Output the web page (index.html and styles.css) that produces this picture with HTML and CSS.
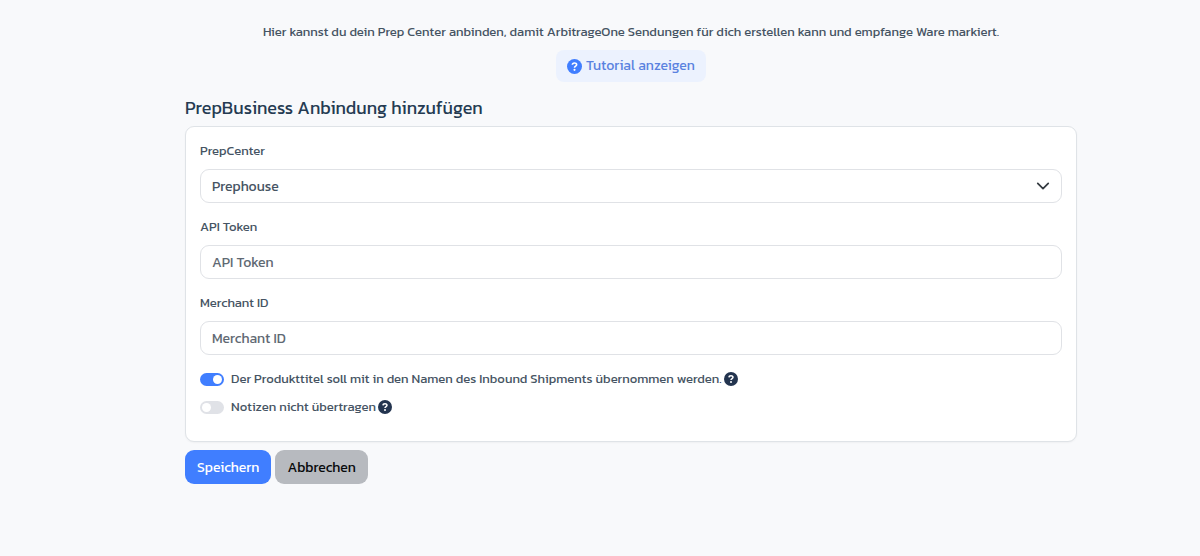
FILE: index.html
```html
<!DOCTYPE html>
<html lang="de">
<head>
<meta charset="utf-8">
<meta name="viewport" content="width=device-width, initial-scale=1">
<title>PrepBusiness Anbindung</title>
<link rel="stylesheet" href="styles.css">
</head>
<body>
<svg class="sprite" aria-hidden="true">
  <symbol id="help" viewBox="0 0 14 14">
    <circle cx="7" cy="7" r="7" fill="currentColor"/>
    <path d="M5 5.4C5.1 3.2 9 3.3 9 5.3C9 6.6 7 6.6 7 8.1" fill="none" stroke="#fff" stroke-width="1.5"/>
    <circle cx="7" cy="10.1" r="1" fill="#fff"/>
  </symbol>
</svg>
<main class="page">
  <header class="intro">
    <p class="intro-text">Hier kannst du dein Prep Center anbinden, damit ArbitrageOne Sendungen für dich erstellen kann und empfange Ware markiert.</p>
    <button class="tutorial" type="button"><svg class="icon icon-lg" aria-hidden="true"><use href="#help"/></svg>Tutorial anzeigen</button>
  </header>
  <form class="form">
    <h1 class="title">PrepBusiness Anbindung hinzufügen</h1>
    <div class="card">
      <div class="field">
        <label class="label" for="center">PrepCenter</label>
        <div class="select-wrap">
          <select class="control select" id="center"><option>Prephouse</option></select>
          <svg class="chevron" viewBox="0 0 16 16" aria-hidden="true"><path d="M2 5l6 6 6-6" fill="none" stroke="#343a40" stroke-width="2" stroke-linecap="round" stroke-linejoin="round"/></svg>
        </div>
      </div>
      <div class="field">
        <label class="label" for="token">API Token</label>
        <input class="control" id="token" type="text" placeholder="API Token">
      </div>
      <div class="field">
        <label class="label" for="merchant">Merchant ID</label>
        <input class="control" id="merchant" type="text" placeholder="Merchant ID">
      </div>
      <div class="switches">
        <div class="switch-row">
          <input class="switch" id="product-title" type="checkbox" role="switch" checked>
          <label class="switch-label" for="product-title">Der Produkttitel soll mit in den Namen des Inbound Shipments übernommen werden.</label>
          <svg class="icon" aria-hidden="true"><use href="#help"/></svg>
        </div>
        <div class="switch-row">
          <input class="switch" id="notes" type="checkbox" role="switch">
          <label class="switch-label" for="notes">Notizen nicht übertragen</label>
          <svg class="icon" aria-hidden="true"><use href="#help"/></svg>
        </div>
      </div>
    </div>
    <div class="actions">
      <button class="button primary" type="submit">Speichern</button>
      <button class="button secondary" type="button">Abbrechen</button>
    </div>
  </form>
</main>
</body>
</html>
```
FILE: styles.css
```css
* { box-sizing: border-box; }
body {
  margin: 0;
  background: #f8f9fb;
  color: #465463;
  font: 400 13px/20px Kanit, Roboto, "Liberation Sans", sans-serif;
}
button, input, select { font-family: inherit; font-weight: inherit; }
.sprite { display: none; }
.page { padding: 22px 0 22px 62px; }
.intro { display: flex; flex-direction: column; align-items: center; gap: 8px; }
.intro-text { margin: 0; text-align: center; }
.tutorial {
  display: flex;
  align-items: center;
  gap: 4px;
  padding: 4px 11px;
  border: 0;
  border-radius: 8px;
  background: #ecf2fe;
  color: #5a82e0;
  font-size: 14px;
  line-height: 24px;
}
.tutorial .icon { color: #407eff; }
.icon { flex: none; width: 14px; height: 14px; color: #23344f; }
.icon-lg { width: 15px; height: 15px; }
.form { max-width: 892px; margin: 14px auto 0; }
.title { margin: 0 0 6px; color: #253b52; font-size: 18px; line-height: 24px; font-weight: 400; }
.card {
  padding: 14px 14px 24px;
  border: 1px solid #dfe3e7;
  border-radius: 9px;
  background: #fff;
  box-shadow: 0 1px 2px #0000000a;
}
.field { margin-bottom: 14px; }
.label { display: block; margin-bottom: 8px; }
.control {
  display: block;
  width: 100%;
  height: 34px;
  padding: 0 11px;
  border: 1px solid #e0e2e6;
  border-radius: 9px;
  background: #fff;
  color: #465463;
  font-size: 14px;
}
.control::placeholder { color: #5f6973; opacity: 1; }
.select-wrap { position: relative; }
.select { appearance: none; }
.chevron { position: absolute; top: 10px; right: 12px; width: 14px; height: 14px; pointer-events: none; }
.switches { display: grid; gap: 8px; }
.switch-row { display: flex; align-items: center; gap: 2px; }
.switch {
  appearance: none;
  display: flex;
  flex: none;
  width: 24px;
  height: 13px;
  margin: 0 5px 0 0;
  padding: 2px;
  border-radius: 7px;
  background: #e0e2e7;
}
.switch::before { content: ""; width: 9px; height: 9px; border-radius: 50%; background: #fff; }
.switch:checked { justify-content: flex-end; background: #407eff; }
.actions { display: flex; gap: 4px; margin-top: 8px; }
.button { padding: 6px 12px 4px; border: 0; border-radius: 9px; font-size: 14px; line-height: 24px; }
.primary { background: #407eff; color: #fff; }
.secondary { background: #b7babf; color: #080a0c; }
```
